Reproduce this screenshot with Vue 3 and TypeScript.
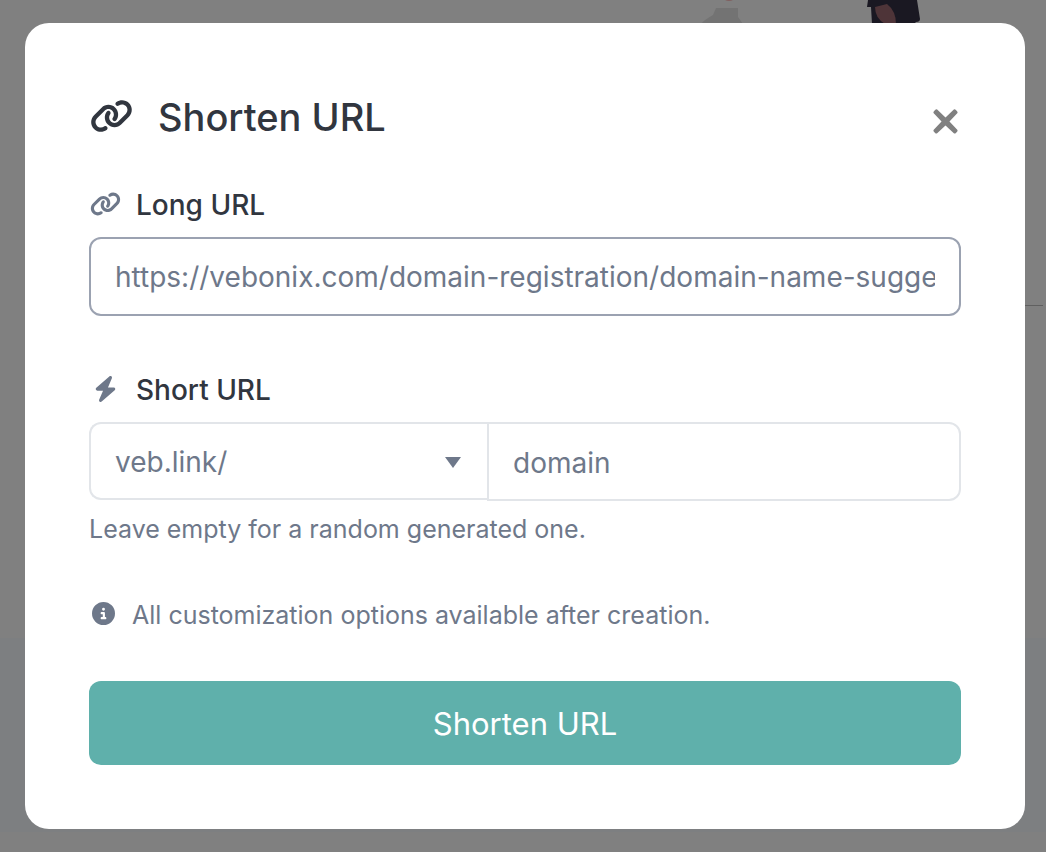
<script setup lang="ts">
import { ref } from 'vue'

const open = ref(true)
const longUrl = ref('https://vebonix.com/domain-registration/domain-name-suggestions')
const domain = ref('veb.link/')
const alias = ref('domain')

const linkPath =
  'M579.8 267.7c56.5-56.5 56.5-148 0-204.5c-50-50-128.8-56.5-186.3-15.4l-1.6 1.1c-14.4 10.3-17.7 30.3-7.4 44.6s30.3 17.7 44.6 7.4l1.6-1.1c32.1-22.9 76-19.3 103.8 8.6c31.5 31.5 31.5 82.5 0 114L422.3 334.8c-31.5 31.5-82.5 31.5-114 0c-27.9-27.9-31.5-71.8-8.6-103.8l1.1-1.6c10.3-14.4 6.9-34.4-7.4-44.6s-34.4-6.9-44.6 7.4l-1.1 1.6C206.5 251.2 213 330 263 380c56.5 56.5 148 56.5 204.5 0L579.8 267.7zM60.2 244.3c-56.5 56.5-56.5 148 0 204.5c50 50 128.8 56.5 186.3 15.4l1.6-1.1c14.4-10.3 17.7-30.3 7.4-44.6s-30.3-17.7-44.6-7.4l-1.6 1.1c-32.1 22.9-76 19.3-103.8-8.6C74 372 74 321 105.5 289.5L217.7 177.2c31.5-31.5 82.5-31.5 114 0c27.9 27.9 31.5 71.8 8.6 103.9l-1.1 1.6c-10.3 14.4-6.9 34.4 7.4 44.6s34.4 6.9 44.6-7.4l1.1-1.6C433.5 260.8 427 182 377 132c-56.5-56.5-148-56.5-204.5 0L60.2 244.3z'
</script>

<template>
  <div class="page">
    <div class="backdrop" aria-hidden="true">
      <div class="band"></div>
      <svg class="art" width="366" height="320" viewBox="0 0 366 320">
        <path d="M45 0h8q-4 2-8 0z" fill="#805f5f" />
        <path d="M36 8h22v9l5 7H21q3-4 12-9z" fill="#737373" />
        <path d="M188 0h49l3 19q0 3-4 3l-2 2h-42l-1-17h-4z" fill="#1a1822" />
        <path d="M195 7l12-3q9 7 9 20h-11q-10-6-10-17z" fill="#4e3438" />
        <path d="M340 305.500h23" stroke="#606060" stroke-width="1" />
      </svg>
    </div>
    <main v-if="open" class="modal" role="dialog" aria-labelledby="modal-title">
      <header class="head">
        <svg class="title-icon" viewBox="0 0 640 512" aria-hidden="true"><path :d="linkPath" /></svg>
        <h1 id="modal-title">Shorten URL</h1>
        <button class="close" type="button" aria-label="Close" @click="open = false">
          <svg viewBox="0 0 24 24" aria-hidden="true">
            <path d="M4 0.500L12 8.200L20 0.500Q21 0 22 1L23.300 2.300Q24 3.200 23.300 4L15.800 12L23.300 20Q24 21 23.300 21.700L22 23Q21 24 20 23.300L12 15.800L4 23.300Q3 24 2 23L0.700 21.700Q0 21 0.700 20L8.200 12L0.700 4Q0 3.200 0.700 2.300L2 1Q3 0 4 0.500Z" />
          </svg>
        </button>
      </header>
      <form @submit.prevent>
        <label class="label" for="long-url">
          <svg class="icon" viewBox="0 0 640 512" aria-hidden="true"><path :d="linkPath" /></svg>
          Long URL
        </label>
        <input id="long-url" v-model="longUrl" class="field long" type="text" />

        <label class="label short-label" for="alias">
          <svg class="icon" viewBox="0 0 448 512" aria-hidden="true">
            <path d="M349.4 44.6c5.900-13.700 1.500-29.700-10.600-38.500s-28.600-8-39.900 1.800l-256 224c-10 8.800-13.600 22.900-8.900 35.300S50.700 288 64 288H175.500L98.600 467.400c-5.900 13.700-1.500 29.700 10.600 38.500s28.600 8 39.900-1.800l256-224c10-8.800 13.600-22.900 8.900-35.300s-16.600-20.700-30-20.700H272.500L349.400 44.600z" />
          </svg>
          Short URL
        </label>
        <div class="group">
          <div class="select-wrap">
            <select v-model="domain" class="field select" aria-label="Domain">
              <option>veb.link/</option>
            </select>
            <svg class="caret" viewBox="0 0 16 11" aria-hidden="true"><path d="M0 0h16L8 11z" /></svg>
          </div>
          <input id="alias" v-model="alias" class="field alias" type="text" aria-describedby="hint" />
        </div>
        <p id="hint" class="hint">Leave empty for a random generated one.</p>

        <p class="note">
          <svg class="info" viewBox="0 0 512 512" aria-hidden="true">
            <path d="M256 512A256 256 0 1 0 256 0a256 256 0 1 0 0 512zM216 336h24V272H216c-13.300 0-24-10.700-24-24s10.700-24 24-24h48c13.300 0 24 10.700 24 24v88h8c13.300 0 24 10.700 24 24s-10.700 24-24 24H216c-13.300 0-24-10.700-24-24s10.700-24 24-24zm40-208a32 32 0 1 1 0 64 32 32 0 1 1 0-64z" />
          </svg>
          All customization options available after creation.
        </p>
        <button class="submit" type="submit">Shorten URL</button>
      </form>
    </main>
  </div>
</template>

<style>
body {
  margin: 0;
  background: #808080;
}
</style>

<style scoped>
.page {
  position: relative;
  box-sizing: border-box;
  min-height: 100vh;
  padding: 23px 21px 23px 25px;
  font-family: Inter, "Liberation Sans", sans-serif;
  color: #31363f;
  overflow: hidden;
}
.page *,
.backdrop {
  box-sizing: border-box;
}
.backdrop {
  position: absolute;
  inset: 0;
  background: #808080;
}
.band {
  position: absolute;
  inset: 638px 0 auto;
  height: 194px;
  background: #7d7f81;
}
.art {
  position: absolute;
  top: 0;
  right: 0;
}
.modal {
  position: relative;
  padding: 64px;
  border-radius: 24px;
  background: #fff;
}
.head {
  display: flex;
  align-items: center;
  height: 60px;
}
.title-icon {
  width: 43px;
  height: 36px;
  margin: 0 25px 2px 1px;
  fill: #31363f;
}
h1 {
  flex: 1;
  margin: 0;
  font-size: 38px;
  font-weight: 500;
  line-height: 60px;
}
.close {
  display: flex;
  margin: 8px 3px 0 0;
  padding: 0;
  border: 0;
  background: none;
  cursor: pointer;
}
.close svg {
  width: 25px;
  height: 25px;
  fill: #808080;
}
.label {
  display: flex;
  align-items: center;
  height: 42px;
  margin-top: 37px;
  margin-bottom: 11px;
  font-size: 28px;
  font-weight: 500;
}
.icon {
  width: 31px;
  height: 26px;
  margin: 0 15px 2px 1px;
  fill: #6e788a;
}
.field {
  display: block;
  width: 100%;
  height: 79px;
  margin: 0;
  padding: 0 24px;
  border: 2px solid #e2e5e9;
  border-radius: 12px;
  outline: 0;
  background: #fff;
  color: #6e788a;
  font-family: inherit;
  font-size: 28px;
}
.long {
  border-color: #9ba2b1;
}
.short-label {
  margin-top: 53px;
}
.group {
  display: grid;
  grid-template-columns: 398fr 474fr;
  align-items: start;
}
.group .field {
  padding-top: 2px;
}
.select-wrap {
  position: relative;
}
.group .select {
  height: 78px;
  border-right: 0;
  border-radius: 12px 0 0 12px;
  appearance: none;
}
.caret {
  position: absolute;
  top: 35px;
  right: 26px;
  width: 16px;
  height: 11px;
  fill: #6e788a;
  pointer-events: none;
}
.group .alias {
  border-radius: 0 12px 12px 0;
}
.hint,
.note {
  margin: 8px 0 0;
  color: #6e788a;
  font-size: 25px;
  line-height: 40px;
}
.note {
  display: flex;
  align-items: center;
  margin-top: 46px;
}
.info {
  width: 23px;
  height: 23px;
  margin: 0 17px 3px 3px;
  fill: #6e788a;
}
.submit {
  display: block;
  width: 100%;
  height: 84px;
  margin-top: 46px;
  padding: 0;
  border: 0;
  border-radius: 12px;
  background: #5fb0ab;
  color: #fff;
  font-family: inherit;
  font-size: 31px;
  cursor: pointer;
}
</style>
